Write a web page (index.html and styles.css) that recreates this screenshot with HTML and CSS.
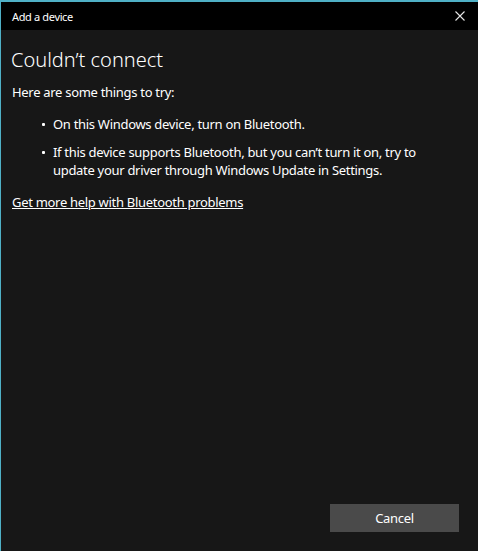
FILE: index.html
```html
<!DOCTYPE html>
<html>
<head>
<meta charset="utf-8">
<link rel="stylesheet" href="styles.css">
</head>
<body>
<div class="window">
  <div class="titlebar">
    <span class="title">Add a device</span>
    <svg class="close" width="10" height="10" viewBox="0 0 10 10"><path d="M0.5 0.5L9.5 9.5M9.5 0.5L0.5 9.5" stroke="#e6e6e6" stroke-width="1.1" fill="none"/></svg>
  </div>
  <div class="content">
    <h1 class="heading">Couldn’t connect</h1>
    <p class="intro">Here are some things to try:</p>
    <ul class="tips">
      <li>On this Windows device, turn on Bluetooth.</li>
      <li>If this device supports Bluetooth, but you can’t turn it on, try to update your driver through Windows Update in Settings.</li>
    </ul>
    <a class="link" href="#">Get more help with Bluetooth problems</a>
    <div class="spacer"></div>
    <div class="actions">
      <button class="btn">Cancel</button>
    </div>
  </div>
</div>
</body>
</html>
```
FILE: styles.css
```css
html, body {
  margin: 0;
  padding: 0;
  background: #171717;
}
.window {
  width: 478px;
  height: 551px;
  box-sizing: border-box;
  border-top: 2px solid #4fb0c6;
  border-left: 1px solid #4fb0c6;
  display: flex;
  flex-direction: column;
  font-family: "Noto Sans", "Open Sans", sans-serif;
  color: #ffffff;
}
.titlebar {
  height: 28px;
  flex: none;
  background: #000000;
  display: flex;
  align-items: center;
  justify-content: space-between;
  padding: 0 13px 0 11px;
}
.title {
  font-size: 11px;
  letter-spacing: -0.35px;
  color: #ffffff;
}
.close {
  display: block;
}
.content {
  flex: 1;
  display: flex;
  flex-direction: column;
  padding: 16px 19px 19px 10px;
  background: #171717;
}
.heading {
  margin: 0;
  font-size: 20px;
  font-weight: 300;
  line-height: 28px;
}
.intro {
  margin: 9px 0 0 1px;
  font-size: 13px;
  letter-spacing: -0.3px;
  line-height: 18px;
}
.tips {
  margin: 14px 0 0 0;
  padding: 0 0 0 42px;
  list-style: none;
  font-size: 13px;
  letter-spacing: -0.3px;
  line-height: 18px;
}
.tips li {
  margin-bottom: 10px;
}
.tips li:last-child {
  margin-bottom: 0;
}
.tips li::before {
  content: "";
  display: inline-block;
  width: 3px;
  height: 3px;
  background: #ffffff;
  border-radius: 1px;
  margin-left: -11px;
  margin-right: 8px;
  vertical-align: 3px;
}
.link {
  margin: 14px 0 0 1px;
  font-size: 13px;
  letter-spacing: -0.3px;
  line-height: 18px;
  color: #ffffff;
  text-decoration: underline;
  align-self: flex-start;
}
.spacer {
  flex: 1;
}
.actions {
  display: flex;
  justify-content: flex-end;
}
.btn {
  width: 129px;
  height: 28px;
  background: #4a4a4a;
  border: none;
  color: #ffffff;
  font-family: inherit;
  font-size: 13px;
  letter-spacing: -0.3px;
  padding: 0;
}
```
